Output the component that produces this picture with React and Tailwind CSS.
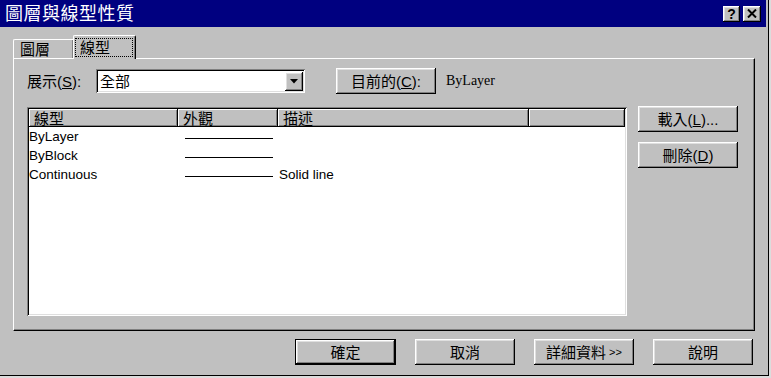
import React from "react";

const raised =
  "shadow-[inset_-1px_-1px_#000,inset_1px_1px_#fff,inset_-2px_-2px_#808080,inset_2px_2px_#dfdfdf]";
const sunken =
  "shadow-[inset_1px_1px_#808080,inset_-1px_-1px_#fff,inset_2px_2px_#000,inset_-2px_-2px_#dfdfdf]";
const headerCell =
  "shadow-[inset_-1px_-1px_#000,inset_1px_1px_#fff,inset_-2px_-2px_#808080]";
const ui = "font-['Liberation_Sans','Noto_Sans_CJK_TC',sans-serif]";

function Btn({ children, className = "", isDefault = false }) {
  if (isDefault) {
    return (
      <div className={`w-[101px] h-[26px] border border-black ${className}`}>
        <div
          className={`w-full h-full bg-[#c0c0c0] ${raised} flex items-center justify-center text-[15px] leading-none text-black`}
        >
          {children}
        </div>
      </div>
    );
  }
  return (
    <div
      className={`w-[100px] h-[26px] bg-[#c0c0c0] ${raised} flex items-center justify-center text-[15px] leading-none text-black ${className}`}
    >
      {children}
    </div>
  );
}

function Row({ name, desc }) {
  return (
    <div className="flex h-[19px] items-center text-[13.5px] leading-none text-black font-['Liberation_Sans',Arial,sans-serif]">
      <div className="w-[149px] pl-[0px]">{name}</div>
      <div className="w-[100px] flex items-center pl-[7px] pt-[3px]">
        <div className="w-[88px] h-px bg-black" />
      </div>
      <div className="pl-[1px]">{desc}</div>
    </div>
  );
}

export default function App() {
  return (
    <div className={`w-[771px] h-[378px] bg-[#dcdcdc] overflow-hidden ${ui}`}>
      <div className="w-[769px] h-[376px] bg-[#c0c0c0] border-r border-b border-black flex flex-col">
        {/* Title bar */}
        <div className="w-[766px] h-[27px] bg-[#000080] flex items-center justify-between shrink-0">
          <div className="pl-[5px] text-white text-[18px] leading-none tracking-[0.5px]">
            圖層與線型性質
          </div>
          <div className="flex gap-[3px] pr-[5px]">
            <div
              className={`w-[17px] h-[16px] bg-[#c0c0c0] ${raised} flex items-center justify-center text-[14px] font-bold leading-none text-black font-['Liberation_Sans',Arial,sans-serif]`}
            >
              ?
            </div>
            <div
              className={`w-[18px] h-[16px] bg-[#c0c0c0] ${raised} flex items-center justify-center`}
            >
              <svg width="10" height="9" viewBox="0 0 10 9">
                <path d="M1 0.5 L9 8.5 M9 0.5 L1 8.5" stroke="#000" strokeWidth="2" />
              </svg>
            </div>
          </div>
        </div>

        {/* Tabs */}
        <div className="mt-[8px] pl-[13px] flex items-end h-[23px] relative z-10">
          <div className="w-[60px] h-[19px] border-t border-l border-white shadow-[inset_-1px_0_#808080] rounded-tl-[2px] flex items-center pl-[6px] text-[15px] leading-none text-black">
            圖層
          </div>
          <div className="w-[63px] h-[24px] -mb-px bg-[#c0c0c0] border-t border-l border-white border-r border-r-black shadow-[inset_-1px_0_#808080] rounded-t-[2px] flex items-start pt-[2px] pl-[1px]">
            <div className="w-[58px] h-[19px] border border-dotted border-black flex items-center pl-[4px] text-[15px] leading-none text-black">
              線型
            </div>
          </div>
        </div>

        {/* Panel */}
        <div className="ml-[13px] w-[742px] h-[273px] border-t border-l border-white border-r border-b border-r-black border-b-black shadow-[inset_-1px_-1px_#808080] pl-[13px] pt-[9px]">
          {/* Row 1 */}
          <div className="flex items-center h-[26px]">
            <div className="w-[69px] text-[15px] leading-none text-black">
              展示(<span className="underline">S</span>):
            </div>
            <div className={`w-[209px] h-[24px] bg-white ${sunken} flex items-center justify-between pl-[4px] pr-[2px]`}>
              <span className="text-[15px] leading-none text-black">全部</span>
              <div className={`w-[18px] h-[19px] bg-[#c0c0c0] ${raised} flex items-center justify-center`}>
                <svg width="8" height="5" viewBox="0 0 8 5">
                  <path d="M0 0 H8 L4 4.5 Z" fill="#000" />
                </svg>
              </div>
            </div>
            <Btn className="ml-[31px]">
              目前的(<span className="underline">C</span>):
            </Btn>
            <div className="ml-[10px] text-[14px] leading-none text-black font-['Liberation_Serif','Times_New_Roman',serif]">
              ByLayer
            </div>
          </div>

          {/* Row 2 */}
          <div className="flex mt-[13px]">
            <div className={`w-[600px] h-[209px] bg-white ${sunken} p-[2px]`}>
              <div className="flex h-[18px] text-[15px] leading-none text-black">
                <div className={`w-[149px] bg-[#c0c0c0] ${headerCell} flex items-center pl-[5px]`}>線型</div>
                <div className={`w-[100px] bg-[#c0c0c0] ${headerCell} flex items-center pl-[5px]`}>外觀</div>
                <div className={`w-[251px] bg-[#c0c0c0] ${headerCell} flex items-center pl-[5px]`}>描述</div>
                <div className={`flex-1 bg-[#c0c0c0] ${headerCell}`} />
              </div>
              <Row name="ByLayer" desc="" />
              <Row name="ByBlock" desc="" />
              <Row name="Continuous" desc="Solid line" />
            </div>
            <div className="ml-[11px] flex flex-col gap-[10px] -mt-[1px]">
              <Btn>
                載入(<span className="underline">L</span>)...
              </Btn>
              <Btn>
                刪除(<span className="underline">D</span>)
              </Btn>
            </div>
          </div>
        </div>

        {/* Bottom buttons */}
        <div className="mt-[8px] flex justify-end gap-[19px] pr-[15px]">
          <Btn isDefault>確定</Btn>
          <Btn>取消</Btn>
          <Btn>
            詳細資料 <span className="text-[11px] ml-[3px]">&gt;&gt;</span>
          </Btn>
          <Btn>說明</Btn>
        </div>
      </div>
    </div>
  );
}
